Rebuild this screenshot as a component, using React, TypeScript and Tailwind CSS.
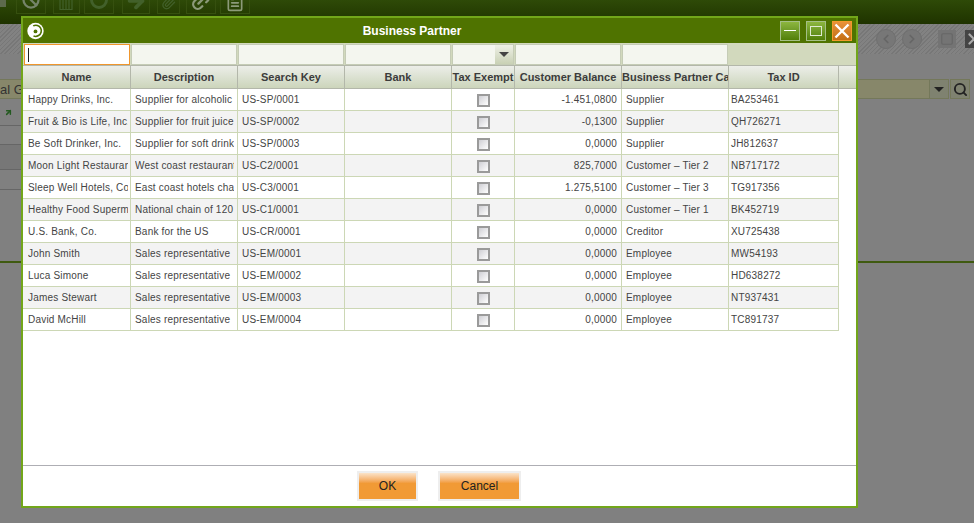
import React from "react";
import { Ban, RotateCw, ArrowRight, Paperclip, Link2, FileText, ChevronLeft, ChevronRight, Search, X, Square } from "lucide-react";

const font = { fontFamily: '"Liberation Sans", Arial, sans-serif' };
const cols = ["w-[108px]", "w-[107px]", "w-[107px]", "w-[107px]", "w-[63px]", "w-[107px]", "w-[107px]", "w-[110px]"];
const heads = ["Name", "Description", "Search Key", "Bank", "Tax Exempt", "Customer Balance", "Business Partner Category", "Tax ID"];
const rows = [
  ["Happy Drinks, Inc.", "Supplier for alcoholic beverages", "US-SP/0001", "-1.451,0800", "Supplier", "BA253461"],
  ["Fruit & Bio is Life, Inc.", "Supplier for fruit juice", "US-SP/0002", "-0,1300", "Supplier", "QH726271"],
  ["Be Soft Drinker, Inc.", "Supplier for soft drinks", "US-SP/0003", "0,0000", "Supplier", "JH812637"],
  ["Moon Light Restaurants", "West coast restaurants", "US-C2/0001", "825,7000", "Customer – Tier 2", "NB717172"],
  ["Sleep Well Hotels, Co.", "East coast hotels chain", "US-C3/0001", "1.275,5100", "Customer – Tier 3", "TG917356"],
  ["Healthy Food Supermarkets", "National chain of 120 stores", "US-C1/0001", "0,0000", "Customer – Tier 1", "BK452719"],
  ["U.S. Bank, Co.", "Bank for the US", "US-CR/0001", "0,0000", "Creditor", "XU725438"],
  ["John Smith", "Sales representative", "US-EM/0001", "0,0000", "Employee", "MW54193"],
  ["Luca Simone", "Sales representative", "US-EM/0002", "0,0000", "Employee", "HD638272"],
  ["James Stewart", "Sales representative", "US-EM/0003", "0,0000", "Employee", "NT937431"],
  ["David McHill", "Sales representative", "US-EM/0004", "0,0000", "Employee", "TC891737"],
];

function ToolBtn({ children, cls }: { children?: React.ReactNode; cls: string }) {
  return <div className={`${cls} h-[14px] shrink-0 border border-[#36500f] border-t-0 flex items-end justify-center overflow-hidden text-[#42602a]`}>{children}</div>;
}

function Background() {
  return (
    <div className="flex flex-col h-full">
      <div className="h-6 shrink-0 bg-gradient-to-b from-[#2e4a08] to-[#1f3300] flex items-start">
        <div className="w-[6px] h-[7px] bg-[#5d6a4c] mr-[10px]" />
        <ToolBtn cls="w-[30px]"><Ban size={18} strokeWidth={3} className="mb-[4px] text-[#75846a]" /></ToolBtn>
        <ToolBtn cls="w-[27px] ml-[7px]">
          <svg width="16" height="12" viewBox="0 0 16 12" className="mb-[3px]" fill="none" stroke="#42602a" strokeWidth="1.2"><path d="M1 0V12M4 0V12M7 0V12M10 0V12M13 0V12M1 11.5H13" /></svg>
        </ToolBtn>
        <ToolBtn cls="w-[30px] ml-[4px]"><RotateCw size={20} strokeWidth={3.5} className="mb-[3px]" /></ToolBtn>
        <ToolBtn cls="w-[28px] ml-[8px]"><ArrowRight size={22} strokeWidth={4} className="mb-[1px]" /></ToolBtn>
        <ToolBtn cls="w-[23px] ml-[7px]"><Paperclip size={15} strokeWidth={2} className="mb-[3px]" /></ToolBtn>
        <ToolBtn cls="w-[30px] ml-[6px]"><Link2 size={22} strokeWidth={2.5} className="text-[#8c9a7a] -rotate-45 mb-[1px]" /></ToolBtn>
        <ToolBtn cls="w-[30px] ml-[4px]"><FileText size={20} strokeWidth={2} className="text-[#8c9a7a] mb-[1px]" /></ToolBtn>
      </div>
      <div className="h-[30px] shrink-0 bg-[repeating-linear-gradient(135deg,#777_0,#777_1px,#828282_1px,#828282_3px)] flex items-center justify-end">
        <div className="w-[20px] h-[20px] rounded-full bg-[#777] border border-[#6f6f6f] flex items-center justify-center text-[#666] mr-[6px]"><ChevronLeft size={14} strokeWidth={3} /></div>
        <div className="w-[20px] h-[20px] rounded-full bg-[#777] border border-[#6f6f6f] flex items-center justify-center text-[#666] mr-[16px]"><ChevronRight size={14} strokeWidth={3} /></div>
        <div className="w-[18px] h-[18px] bg-[#747474] flex items-center justify-center text-[#666] mr-[9px]"><Square size={14} /></div>
        <div className="w-[9px] h-[18px] bg-[#444] overflow-hidden flex items-center text-[#aaa]"><X size={18} strokeWidth={3} className="shrink-0" /></div>
      </div>
      <div className="h-[25px] shrink-0" />
      <div className="h-[20px] shrink-0 flex items-stretch pr-[4px]">
        <div className="flex-1 bg-[#87876a] border-y border-[#74785a] text-[13px] leading-[19px] text-[#333] overflow-hidden">
          <span className="whitespace-nowrap">al G</span>
        </div>
        <div className="w-[20px] bg-[#7f8270] border border-[#74785a] flex items-center justify-center mr-px">
          <div className="w-0 h-0 border-x-[5px] border-x-transparent border-t-[5px] border-t-[#222]" />
        </div>
        <div className="w-[20px] bg-[#7f8270] border border-[#74785a] flex items-center justify-center text-[#222]"><Search size={15} strokeWidth={3} /></div>
      </div>
      <div className="w-[30px] h-[27px] shrink-0 border-b border-[#666] flex items-center pl-[4px] text-[#245a20]">
        <ArrowRight size={9} strokeWidth={4} className="-rotate-45" />
      </div>
      <div className="w-[30px] h-[19px] shrink-0 border-b border-[#666]" />
      <div className="w-[30px] h-[25px] shrink-0 border-b border-[#666] bg-[#777]" />
      <div className="w-[30px] h-[20px] shrink-0 border-b border-[#666]" />
      <div className="h-[73px] shrink-0 border-b-2 border-[#3f5a10]" />
      <div className="flex-1" />
    </div>
  );
}

function Logo() {
  return (
    <svg width="17" height="18" viewBox="0 0 17 18" className="shrink-0">
      <circle cx="8.5" cy="9" r="8.2" fill="#fff" />
      <path d="M6.2 3.9 A5.4 5.4 0 0 1 11.5 13.5 A5.4 5.4 0 0 1 6.5 14" fill="none" stroke="#4f7300" strokeWidth="1.6" />
      <circle cx="8.5" cy="9.4" r="1.9" fill="#4f7300" />
    </svg>
  );
}

function WinBtn({ kind }: { kind: "min" | "max" | "close" }) {
  const cls = kind === "close"
    ? "border-[#f39a2a] bg-gradient-to-b from-[#e8923a] to-[#c46f12]"
    : "border-[#a4bf86] bg-gradient-to-b from-[#8cb63e] to-[#527f06]";
  return (
    <div className={`w-5 h-5 border ${cls} flex items-center justify-center`}>
      {kind === "min" && <div className="w-[12px] h-px bg-white" />}
      {kind === "max" && <div className="w-[12px] h-[10px] border border-[#dfead0]" />}
      {kind === "close" && (
        <svg width="16" height="16" viewBox="0 0 16 16"><path d="M1.5 1.5 L14.5 14.5 M14.5 1.5 L1.5 14.5" stroke="#fff" strokeWidth="2.4" /></svg>
      )}
    </div>
  );
}

function FilterRow() {
  return (
    <div className="h-[22px] shrink-0 bg-[#d2d9bd] flex">
      {cols.slice(0, 7).map((c, i) => (
        <div key={i} className={`${c} ${i === 0 ? "pl-px" : ""} shrink-0 h-full pt-px pr-px`}>
          {i === 0 ? (
            <div className="h-full bg-white border border-[#f0962d] flex items-center pl-[3px]">
              <div className="w-px h-[14px] bg-[#222]" />
            </div>
          ) : i === 4 ? (
            <div className="h-full flex bg-[#f4f6ef] border border-[#c5ccb6]">
              <div className="flex-1" />
              <div className="w-[18px] bg-gradient-to-b from-[#eef0e6] to-[#c9d1b5] flex items-center justify-center">
                <div className="w-0 h-0 border-x-[5px] border-x-transparent border-t-[5px] border-t-[#444]" />
              </div>
            </div>
          ) : (
            <div className="h-full bg-[#f4f6ef] border border-[#c5ccb6]" />
          )}
        </div>
      ))}
    </div>
  );
}

function HeaderRow() {
  return (
    <div className="h-6 shrink-0 flex bg-gradient-to-b from-[#eceee9] to-[#ccd5bb] border-y border-[#b3b7aa] box-border">
      {heads.map((h, i) => (
        <div key={h} className={`${cols[i]} shrink-0 border-r border-[#b3b7aa] flex items-center justify-center overflow-hidden`}>
          {i === 6
            ? <span className="block w-[106px] overflow-hidden whitespace-nowrap text-[11px] font-bold text-[#3c3c3c]">{h}</span>
            : <span className="text-[11px] font-bold text-[#3c3c3c] whitespace-nowrap">{h}</span>}
        </div>
      ))}
    </div>
  );
}

function Row({ r, alt }: { r: string[]; alt: boolean }) {
  const cell = "shrink-0 border-r border-b border-[#ccd7b5] h-full whitespace-nowrap leading-[21px] text-[10px] tracking-[0.2px]";
  const clip = "overflow-hidden";
  return (
    <div className={`h-[22px] shrink-0 flex w-[816px] text-[#444] ${alt ? "bg-[#f3f3f3]" : "bg-white"}`}>
      <div className={`${cell} ${cols[0]} pl-[5px] pr-[2px]`}><div className={clip}>{r[0]}</div></div>
      <div className={`${cell} ${cols[1]} pl-1 pr-[3px]`}><div className={clip}>{r[1]}</div></div>
      <div className={`${cell} ${cols[2]} px-1`}><div className={clip}>{r[2]}</div></div>
      <div className={`${cell} ${cols[3]} px-1`} />
      <div className={`${cell} ${cols[4]} flex justify-center pt-[5px]`}>
        <div className="w-[13px] h-[13px] border-2 border-[#9a9a9a] bg-gradient-to-br from-[#cfcfd4] to-white" />
      </div>
      <div className={`${cell} ${cols[5]} px-1 text-right`}>{r[3]}</div>
      <div className={`${cell} ${cols[6]} px-1`}>{r[4]}</div>
      <div className={`${cell} ${cols[7]} pl-[2px]`}>{r[5]}</div>
    </div>
  );
}

export default function App() {
  return (
    <div style={font} className="relative w-[974px] h-[523px] overflow-hidden bg-[#808080]">
      <Background />
      <div className="absolute left-[21px] top-4 w-[837px] h-[492px] border-2 border-[#72a61a] bg-white flex flex-col">
        <div className="h-[25px] shrink-0 bg-[#4f7300] flex items-center pl-1 pr-[4px]">
          <Logo />
          <div className="flex-1 text-center text-white text-[12px] font-bold">Business Partner</div>
          <div className="flex gap-[6px]">
            <WinBtn kind="min" />
            <WinBtn kind="max" />
            <WinBtn kind="close" />
          </div>
        </div>
        <FilterRow />
        <HeaderRow />
        <div className="flex-1 flex flex-col bg-white">
          {rows.map((r, i) => <Row key={i} r={r} alt={i % 2 === 1} />)}
        </div>
        <div className="h-[41px] shrink-0 border-t border-[#aeaeb4] flex justify-center items-start gap-5 pt-[5px] pr-px">
          <button className="w-[61px] h-[30px] border-2 border-[#eeeeee] bg-gradient-to-b from-[#fae3c8] via-[#f19a35] via-40% to-[#f19a35] text-[12px] text-[#222]">OK</button>
          <button className="w-[83px] h-[30px] border-2 border-[#eeeeee] bg-gradient-to-b from-[#fae3c8] via-[#f19a35] via-40% to-[#f19a35] text-[12px] text-[#222]">Cancel</button>
        </div>
      </div>
    </div>
  );
}
